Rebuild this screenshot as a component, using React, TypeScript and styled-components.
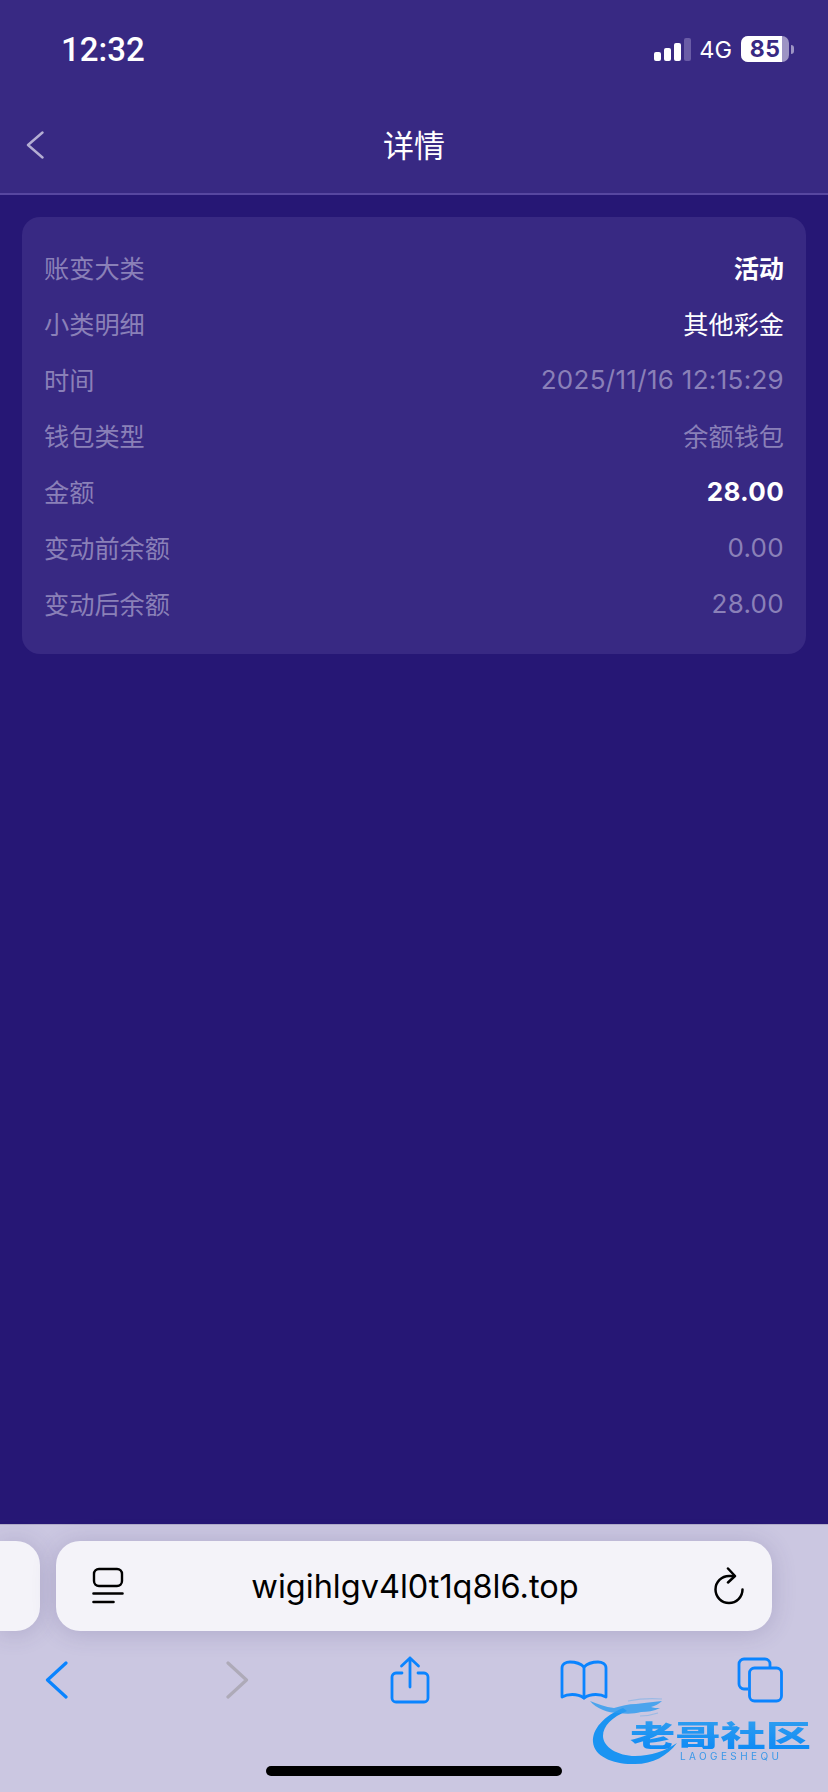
import React from "react";
import styled, { createGlobalStyle } from "styled-components";

const rows = [
  { label: "账变大类", value: "活动", tone: "strong" },
  { label: "小类明细", value: "其他彩金", tone: "white" },
  { label: "时间", value: "2025/11/16 12:15:29", tone: "muted", num: true },
  { label: "钱包类型", value: "余额钱包", tone: "muted" },
  { label: "金额", value: "28.00", tone: "strong", num: true },
  { label: "变动前余额", value: "0.00", tone: "muted", num: true },
  { label: "变动后余额", value: "28.00", tone: "muted", num: true },
];

const BLUE = "#0a84ff";

export default function App() {
  return (
    <Page>
      <GlobalStyle />
      <Header>
        <StatusBar>
          <Clock>12:32</Clock>
          <StatusRight>
            <SignalBars>
              <Bar $h={9} />
              <Bar $h={13} />
              <Bar $h={18} />
              <Bar $h={23} $off />
            </SignalBars>
            <Network>4G</Network>
            <Battery>
              <BatteryBody>
                <BatteryFill />
                <BatteryLevel>85</BatteryLevel>
              </BatteryBody>
              <BatteryNub />
            </Battery>
          </StatusRight>
        </StatusBar>
        <NavBar>
          <BackButton>
            <svg width="18" height="28" viewBox="0 0 18 28" fill="none">
              <path d="M16.5 1.5 2 14l14.5 12.5" stroke="#b4aed3" strokeWidth="2.4" strokeLinecap="round" strokeLinejoin="round" />
            </svg>
          </BackButton>
          <Title>详情</Title>
        </NavBar>
      </Header>

      <Content>
        <Card>
          {rows.map((r) => (
            <Row key={r.label}>
              <Label>{r.label}</Label>
              <Value $tone={r.tone} $num={r.num}>{r.value}</Value>
            </Row>
          ))}
        </Card>
      </Content>

      <Toolbar>
        <TabStrip>
          <PrevTab />
          <UrlBar>
            <svg width="32" height="38" viewBox="0 0 32 38" fill="none" stroke="#000">
              <rect x="2" y="2" width="28" height="17" rx="5" strokeWidth="2.4" />
              <path d="M1.5 26.5h29M1.5 35h20" strokeWidth="2.6" strokeLinecap="round" />
            </svg>
            <Url>wigihlgv4l0t1q8l6.top</Url>
            <svg width="32" height="38" viewBox="0 0 32 38" fill="none" stroke="#000" strokeWidth="2.5" strokeLinecap="round" strokeLinejoin="round">
              <path d="M29.5 22.5A13.5 13.5 0 1 1 16 9h5" />
              <path d="M15 1.5 22 9l-7 6.5" />
            </svg>
          </UrlBar>
        </TabStrip>
        <ActionRow>
          <ActionSlot>
            <svg width="24" height="38" viewBox="0 0 24 38" fill="none" stroke={BLUE} strokeWidth="3.2" strokeLinecap="round" strokeLinejoin="round">
              <path d="M21 2 2.5 19 21 36" />
            </svg>
          </ActionSlot>
          <ActionSlot>
            <svg width="24" height="38" viewBox="0 0 24 38" fill="none" stroke="#aeaab8" strokeWidth="3.2" strokeLinecap="round" strokeLinejoin="round">
              <path d="M3 2l18.5 17L3 36" />
            </svg>
          </ActionSlot>
          <ActionSlot>
            <svg width="40" height="48" viewBox="0 0 40 48" fill="none" stroke={BLUE} strokeWidth="2.8" strokeLinecap="round" strokeLinejoin="round">
              <path d="M12 17H6a4 4 0 0 0-4 4v21a4 4 0 0 0 4 4h28a4 4 0 0 0 4-4V21a4 4 0 0 0-4-4h-6" />
              <path d="M20 31V2M11.5 10 20 2l8.5 8" />
            </svg>
          </ActionSlot>
          <ActionSlot>
            <svg width="48" height="40" viewBox="0 0 48 40" fill="none" stroke={BLUE} strokeWidth="2.8" strokeLinecap="round" strokeLinejoin="round">
              <path d="M24 7C20 3 15 2 10 2 6 2 2 4 2 8v29c5-3 15-4 22 1 7-5 17-4 22-1V8c0-4-4-6-8-6-5 0-10 1-14 5Z" />
              <path d="M24 7v31" />
            </svg>
          </ActionSlot>
          <ActionSlot>
            <svg width="46" height="46" viewBox="0 0 46 46" fill="none" stroke={BLUE} strokeWidth="2.8" strokeLinejoin="round">
              <path d="M11 32H7a5 5 0 0 1-5-5V7a5 5 0 0 1 5-5h21a5 5 0 0 1 5 5v4" />
              <rect x="12.5" y="11" width="32" height="33" rx="5" />
            </svg>
          </ActionSlot>
        </ActionRow>
        <HomeIndicator />
        <Watermark>
          <DragonMark width="96" height="74" viewBox="0 0 96 74" fill="none">
            <path d="M33 12C14 20 2 33 3 46c1 15 22 23 42 22 18 0 32-8 42-21-12 8-26 13-42 13C28 60 13 51 13 40c0-10 9-19 24-25Z" fill="#1a94f2" />
            <path d="M0 5c8 3 15 6 24 7 8-2 14-4 22-4 8-1 17-2 26-3-3 3-7 5-11 6 2 1 6 1 9 1-6 3-13 4-19 4-7 2-15 2-22 1-6 0-12-1-16-3C8 12 3 9 0 5Z" fill="#2a9bf0" opacity=".8" />
            <path d="M38 5c10-2 22-3 34-2M50 20c6 0 12-1 18-3" stroke="#2a9bf0" strokeWidth="1.2" opacity=".3" />
          </DragonMark>
          <WatermarkName>老哥社区</WatermarkName>
          <WatermarkSub>LAOGESHEQU</WatermarkSub>
        </Watermark>
      </Toolbar>
    </Page>
  );
}

const GlobalStyle = createGlobalStyle`
  html, body {
    margin: 0;
    padding: 0;
    background: #261775;
  }
`;

const Page = styled.div`
  width: 828px;
  height: 1792px;
  display: flex;
  flex-direction: column;
  overflow: hidden;
  background: #261775;
  font-family: Inter, "Noto Sans CJK SC", sans-serif;
`;

const Header = styled.header`
  background: #382983;
  border-bottom: 2px solid #5747a0;
`;

const StatusBar = styled.div`
  height: 98px;
  box-sizing: border-box;
  padding: 0 34px 0 61px;
  display: flex;
  align-items: center;
  justify-content: space-between;
`;

const Clock = styled.div`
  font-family: Roboto, sans-serif;
  font-size: 33px;
  font-weight: 500;
  color: #fff;
`;

const StatusRight = styled.div`
  display: flex;
  align-items: center;
`;

const SignalBars = styled.div`
  display: flex;
  align-items: flex-end;
  gap: 3px;
  height: 23px;
  margin-right: 8px;
`;

const Bar = styled.span<{ $h: number; $off?: boolean }>`
  width: 7px;
  height: ${(p) => p.$h}px;
  border-radius: 2px;
  background: ${(p) => (p.$off ? "#6a5ca6" : "#fff")};
`;

const Network = styled.div`
  font-size: 23.5px;
  color: #fff;
  margin-right: 9px;
`;

const Battery = styled.div`
  display: flex;
  align-items: center;
  gap: 2px;
`;

const BatteryBody = styled.div`
  width: 48px;
  height: 26px;
  border-radius: 7px;
  overflow: hidden;
  position: relative;
  background: #9d94c4;
  display: flex;
  align-items: center;
  justify-content: center;
`;

const BatteryFill = styled.div`
  position: absolute;
  inset: 0 7px 0 0;
  background: #fff;
`;

const BatteryLevel = styled.span`
  position: relative;
  font-size: 23px;
  font-weight: 700;
  color: #382983;
  letter-spacing: 0.5px;
`;

const BatteryNub = styled.div`
  width: 3px;
  height: 9px;
  border-radius: 0 3px 3px 0;
  background: #9d94c4;
`;

const NavBar = styled.div`
  height: 95px;
  position: relative;
  display: flex;
  align-items: center;
  justify-content: center;
`;

const BackButton = styled.div`
  position: absolute;
  left: 26px;
  top: 33px;
  line-height: 0;
`;

const Title = styled.h1`
  margin: 0 0 4px;
  font-family: "Noto Sans CJK SC", sans-serif;
  font-size: 31px;
  font-weight: 400;
  color: #fff;
`;

const Content = styled.main`
  flex: 1;
  padding: 22px 22px 0;
`;

const Card = styled.section`
  padding: 22px 22px 23px;
  border-radius: 18px;
  background: #382983;
`;

const Row = styled.div`
  height: 56px;
  display: flex;
  align-items: center;
  justify-content: space-between;
  font-size: 25.2px;
`;

const Label = styled.span`
  color: #8a80b8;
`;

const Value = styled.span<{ $tone: string; $num?: boolean }>`
  color: ${(p) => (p.$tone === "muted" ? "#8a80b8" : "#fff")};
  font-weight: ${(p) => (p.$tone === "strong" ? 700 : 400)};
  font-size: ${(p) => (p.$num ? "26px" : "25.2px")};
  letter-spacing: ${(p) => (p.$num ? "0.3px" : "0")};
`;

const Toolbar = styled.footer`
  position: relative;
  height: 268px;
  box-sizing: border-box;
  padding-top: 16px;
  background: #cbc7e1;
  border-top: 1px solid #b0abc8;
`;

const TabStrip = styled.div`
  display: flex;
  gap: 16px;
  height: 90px;
`;

const PrevTab = styled.div`
  width: 40px;
  border-radius: 0 24px 24px 0;
  background: #f4f3f9;
  box-shadow: 0 2px 24px rgba(60, 50, 110, 0.2);
`;

const UrlBar = styled.div`
  width: 716px;
  box-sizing: border-box;
  padding: 0 27px 0 36px;
  display: flex;
  align-items: center;
  justify-content: space-between;
  border-radius: 24px;
  background: #f4f3f9;
  box-shadow: 0 2px 24px rgba(60, 50, 110, 0.2);
`;

const Url = styled.span`
  margin-right: 7px;
  font-size: 32.5px;
  color: #000;
`;

const ActionRow = styled.div`
  height: 72px;
  margin-top: 13px;
  padding-left: 27px;
  display: grid;
  grid-template-columns: 180px 173px 174px 176px 60px;
  align-items: center;
`;

const ActionSlot = styled.div`
  width: 60px;
  display: flex;
  justify-content: center;
  line-height: 0;
`;

const HomeIndicator = styled.div`
  position: absolute;
  left: 266px;
  bottom: 16px;
  width: 296px;
  height: 10px;
  border-radius: 5px;
  background: #000;
`;

const Watermark = styled.div`
  position: absolute;
  left: 590px;
  top: 171px;
  width: 226px;
  height: 76px;
  filter: blur(0.7px);
`;

const DragonMark = styled.svg`
  display: block;
`;

const WatermarkName = styled.div`
  position: absolute;
  left: 40px;
  top: 24px;
  font-family: "Noto Sans CJK SC", sans-serif;
  font-size: 29px;
  font-weight: 900;
  line-height: 29px;
  white-space: nowrap;
  transform: scaleX(1.56);
  transform-origin: top left;
  background: linear-gradient(#2e9df0, #0f8bf5);
  -webkit-background-clip: text;
  background-clip: text;
  color: transparent;
`;

const WatermarkSub = styled.div`
  position: absolute;
  left: 90px;
  top: 55px;
  font-family: Inter, sans-serif;
  font-size: 10px;
  line-height: 10px;
  letter-spacing: 3.4px;
  color: #3a98e8;
  white-space: nowrap;
`;
